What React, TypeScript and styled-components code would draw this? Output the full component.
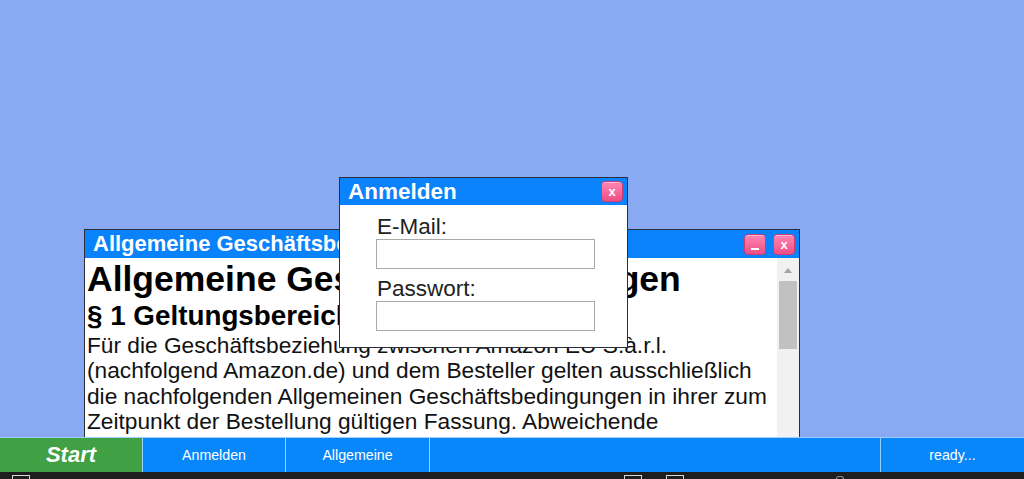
import React from "react";
import styled, { createGlobalStyle } from "styled-components";

const GlobalStyle = createGlobalStyle`
  html, body {
    margin: 0;
    padding: 0;
    width: 1024px;
    height: 479px;
    overflow: hidden;
    font-family: "Liberation Sans", Arial, sans-serif;
  }
`;

const Screen = styled.div`
  width: 1024px;
  height: 479px;
  display: flex;
  flex-direction: column;
`;

const Desktop = styled.div`
  position: relative;
  flex: 1;
  background-color: #89aaf3;
  overflow: hidden;
`;

const Window = styled.div<{ $x: number; $y: number; $w: number; $h: number }>`
  position: absolute;
  left: ${(p) => p.$x}px;
  top: ${(p) => p.$y}px;
  width: ${(p) => p.$w}px;
  height: ${(p) => p.$h}px;
  box-sizing: border-box;
  border: 1px solid #2a2f3a;
  background-color: #ffffff;
  display: flex;
  flex-direction: column;
`;

const TitleBar = styled.div<{ $h: number }>`
  height: ${(p) => p.$h}px;
  flex: 0 0 auto;
  background-color: #0a82fb;
  display: flex;
  align-items: center;
  padding: 0 4px 0 8px;
  gap: 7px;
  overflow: hidden;
`;

const Title = styled.div<{ $size: number }>`
  flex: 1;
  color: #ffffff;
  font-weight: bold;
  font-size: ${(p) => p.$size}px;
  white-space: nowrap;
  overflow: hidden;
`;

const WinButton = styled.div`
  width: 22px;
  height: 21px;
  box-sizing: border-box;
  border-radius: 4px;
  background: linear-gradient(#ff86b2, #ee4f86);
  border: 1px solid #d03a70;
  box-shadow: inset 0 1px 0 rgba(255, 255, 255, 0.45);
  color: #ffffff;
  font-size: 13px;
  font-weight: bold;
  display: flex;
  align-items: center;
  justify-content: center;
  line-height: 1;
`;

const MinBar = styled.span`
  display: block;
  width: 8px;
  height: 2px;
  margin-top: 10px;
  background: #ffffff;
`;

const DocBody = styled.div`
  flex: 1;
  display: flex;
  min-height: 0;
`;

const DocText = styled.div`
  flex: 1;
  padding: 1px 0 0 2px;
  color: #000000;
  overflow: hidden;
`;

const H1 = styled.h1`
  margin: 0;
  font-size: 35.5px;
  line-height: 40px;
  font-weight: bold;
  white-space: nowrap;
`;

const H2 = styled.h2`
  margin: 0;
  font-size: 27.8px;
  line-height: 33px;
  font-weight: bold;
  white-space: nowrap;
`;

const Para = styled.p`
  margin: 1px 0 0;
  font-size: 22.7px;
  line-height: 25.3px;
  color: #111111;
  white-space: nowrap;
`;

const ScrollTrack = styled.div`
  width: 22px;
  flex: 0 0 22px;
  background-color: #f1f1f1;
  display: flex;
  flex-direction: column;
  align-items: center;
  padding-top: 10px;
  box-sizing: border-box;
`;

const ScrollArrow = styled.div`
  width: 0;
  height: 0;
  border-left: 4px solid transparent;
  border-right: 4px solid transparent;
  border-bottom: 5px solid #a3a3a3;
`;

const ScrollThumb = styled.div`
  margin-top: 8px;
  width: 18px;
  height: 68px;
  background-color: #c1c1c1;
`;

const Form = styled.div`
  flex: 1;
  padding: 10px 0 0 36px;
  display: flex;
  flex-direction: column;
`;

const Label = styled.label`
  font-size: 22.5px;
  line-height: 24px;
  color: #222222;
  margin-left: 1px;
`;

const Input = styled.div`
  width: 219px;
  height: 30px;
  box-sizing: border-box;
  border: 1px solid #a9a9a9;
  background: #ffffff;
  margin-bottom: 8px;
`;

const Taskbar = styled.div`
  height: 35px;
  flex: 0 0 35px;
  display: grid;
  grid-template-columns: 142px 142px 143px 1fr 143px;
  column-gap: 1px;
  background-color: #9ccfff;
  border-top: 1px solid #9ccfff;
  box-sizing: border-box;
`;

const TaskButton = styled.div<{ $start?: boolean }>`
  background-color: ${(p) => (p.$start ? "#41a043" : "#0887fb")};
  color: #ffffff;
  display: flex;
  align-items: center;
  justify-content: center;
  font-size: ${(p) => (p.$start ? "22px" : "14.2px")};
  font-style: ${(p) => (p.$start ? "italic" : "normal")};
  font-weight: ${(p) => (p.$start ? "bold" : "normal")};
`;

const SystemStrip = styled.div`
  height: 7px;
  flex: 0 0 7px;
  background-color: #1e1e1e;
  display: flex;
  align-items: flex-end;
  overflow: hidden;
`;

const TrayBox = styled.span<{ $ml: number }>`
  margin-left: ${(p) => p.$ml}px;
  width: 18px;
  height: 4px;
  box-sizing: border-box;
  border: 1px solid #d8d8d8;
  border-bottom: none;
`;

const TrayDot = styled.span<{ $ml: number }>`
  margin-left: ${(p) => p.$ml}px;
  width: 8px;
  height: 3px;
  box-sizing: border-box;
  border: 1px solid #8a8a8a;
  border-bottom: none;
  border-radius: 4px 4px 0 0;
`;

export default function App() {
  return (
    <Screen>
      <GlobalStyle />
      <Desktop>
        <Window $x={84} $y={229} $w={716} $h={240}>
          <TitleBar $h={28}>
            <Title $size={22}>Allgemeine Geschäftsbedingungen</Title>
            <WinButton>
              <MinBar />
            </WinButton>
            <WinButton>x</WinButton>
          </TitleBar>
          <DocBody>
            <DocText>
              <H1>Allgemeine Geschäftsbedingungen</H1>
              <H2>§ 1 Geltungsbereich</H2>
              <Para>
                Für die Geschäftsbeziehung zwischen Amazon EU S.à.r.l.
                <br />
                (nachfolgend Amazon.de) und dem Besteller gelten ausschließlich
                <br />
                die nachfolgenden Allgemeinen Geschäftsbedingungen in ihrer zum
                <br />
                Zeitpunkt der Bestellung gültigen Fassung. Abweichende
              </Para>
            </DocText>
            <ScrollTrack>
              <ScrollArrow />
              <ScrollThumb />
            </ScrollTrack>
          </DocBody>
        </Window>

        <Window $x={339} $y={177} $w={289} $h={171}>
          <TitleBar $h={27}>
            <Title $size={22.5}>Anmelden</Title>
            <WinButton>x</WinButton>
          </TitleBar>
          <Form>
            <Label>E-Mail:</Label>
            <Input />
            <Label>Passwort:</Label>
            <Input />
          </Form>
        </Window>
      </Desktop>
      <Taskbar>
        <TaskButton $start>Start</TaskButton>
        <TaskButton>Anmelden</TaskButton>
        <TaskButton>Allgemeine</TaskButton>
        <TaskButton />
        <TaskButton>ready...</TaskButton>
      </Taskbar>
      <SystemStrip>
        <TrayBox $ml={12} />
        <TrayBox $ml={594} />
        <TrayBox $ml={24} />
        <TrayDot $ml={152} />
      </SystemStrip>
    </Screen>
  );
}
